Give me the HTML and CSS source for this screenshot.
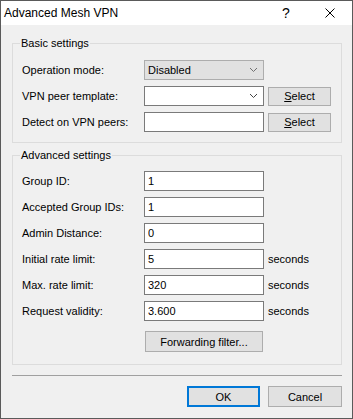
FILE: index.html
```html
<!DOCTYPE html>
<html>
<head>
  <meta charset="UTF-8">
  <title>Advanced Mesh VPN</title>
  <link rel="stylesheet" href="styles.css">
</head>
<body>

  <div class="window">
    <div class="titlebar">
      <span class="title">Advanced Mesh VPN</span>
      <span class="tbtn help">?</span>
      <span class="tbtn close">
        <svg width="10" height="10" viewBox="0 0 10 10"><path d="M0.5 0.5 L9.5 9.5 M9.5 0.5 L0.5 9.5" stroke="#000" stroke-width="1" fill="none"/></svg>
      </span>
    </div>

    <div class="content">
      <fieldset class="group first">
        <legend>Basic settings</legend>
        <div class="rows">
          <label>Operation mode:</label>
          <div class="combo gray"><span>Disabled</span><svg class="chev" width="7" height="4" viewBox="0 0 7 4"><path d="M0 0 L3.5 3.5 L7 0" stroke="#707070" fill="none"/></svg></div>
          <span></span>

          <label>VPN peer template:</label>
          <div class="combo"><span></span><svg class="chev" width="7" height="4" viewBox="0 0 7 4"><path d="M0 0 L3.5 3.5 L7 0" stroke="#444" fill="none"/></svg></div>
          <button class="btn small"><u>S</u>elect</button>

          <label>Detect on VPN peers:</label>
          <input class="field" value="">
          <button class="btn small"><u>S</u>elect</button>
        </div>
      </fieldset>

      <fieldset class="group second">
        <legend>Advanced settings</legend>
        <div class="rows">
          <label>Group ID:</label>
          <input class="field" value="1">
          <span></span>

          <label>Accepted Group IDs:</label>
          <input class="field" value="1">
          <span></span>

          <label>Admin Distance:</label>
          <input class="field" value="0">
          <span></span>

          <label>Initial rate limit:</label>
          <input class="field" value="5">
          <span class="unit">seconds</span>

          <label>Max. rate limit:</label>
          <input class="field" value="320">
          <span class="unit">seconds</span>

          <label>Request validity:</label>
          <input class="field" value="3.600">
          <span class="unit">seconds</span>
        </div>
        <div class="filter-row">
          <button class="btn filter">Forwarding filter...</button>
        </div>
      </fieldset>

      <div class="separator"></div>

      <div class="footer">
        <button class="btn dialog ok">OK</button>
        <button class="btn dialog cancel">Cancel</button>
      </div>
    </div>
  </div>

</body>
</html>
```

FILE: styles.css
```css
* { box-sizing: border-box; }
html, body { margin: 0; padding: 0; }
body {
  font-family: "Liberation Sans", Arial, sans-serif;
  font-size: 11px;
  color: #000;
  background: #f0f0f0;
}

.window {
  width: 353px;
  height: 419px;
  border: 1px solid #5a5a5a;
  background: #f0f0f0;
  display: flex;
  flex-direction: column;
}

.titlebar {
  height: 24px;
  background: #fff;
  display: flex;
  align-items: center;
  padding-left: 3px;
  font-size: 12px;
  flex-shrink: 0;
}
.title { flex: 1; }
.tbtn {
  width: 44px;
  height: 24px;
  display: flex;
  align-items: center;
  justify-content: center;
}
.help { font-size: 14px; }

.content {
  padding: 11px 10px 0 11px;
  display: flex;
  flex-direction: column;
}

.group {
  margin: 0;
  border: 1px solid #dcdcdc;
  padding: 10px 9px 10px 9px;
  min-width: 0;
}
.group legend {
  padding: 0 1px;
  margin-left: -2px;
  line-height: 14px;
}
.group.second {
  margin-top: 5px;
  padding-top: 9px;
  padding-bottom: 12px;
}

.rows {
  display: grid;
  grid-template-columns: 118px 120px auto;
  grid-auto-rows: 20px;
  row-gap: 6px;
  column-gap: 4px;
  align-items: center;
}
.rows label { white-space: nowrap; }

.field {
  height: 20px;
  width: 120px;
  border: 1px solid #7a7a7a;
  background: #fff;
  padding: 0 3px;
  font: inherit;
  color: #000;
  outline: none;
}

.combo {
  height: 20px;
  border: 1px solid #7a7a7a;
  background: #fff;
  display: flex;
  align-items: center;
  justify-content: space-between;
  padding: 0 6px 0 3px;
}
.combo.gray {
  background: #e1e1e1;
  border-color: #adadad;
}
.chev { display: block; }

.btn {
  font: inherit;
  color: #000;
  background: #e1e1e1;
  border: 1px solid #adadad;
  padding: 0;
  height: 21px;
}
.btn.small {
  width: 63px;
  height: 19px;
}
.filter-row {
  display: flex;
  padding-left: 123px;
  margin-top: 10px;
}
.btn.filter {
  width: 118px;
  height: 21px;
}

.separator {
  margin-top: 10px;
  height: 1px;
  background: #a0a0a0;
}

.footer {
  margin-top: 10px;
  display: flex;
  justify-content: flex-end;
  gap: 8px;
}
.btn.dialog { height: 21px; }
.btn.ok {
  width: 73px;
  border: 2px solid #0078d7;
}
.btn.cancel { width: 74px; }
```
